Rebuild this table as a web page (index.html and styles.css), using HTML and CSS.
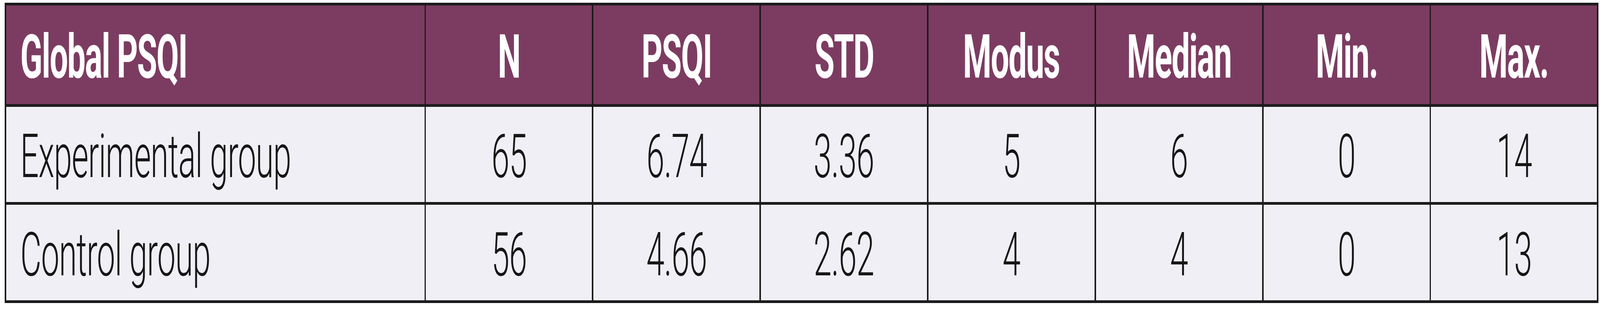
FILE: index.html
```html
<!DOCTYPE html>
<html lang="en">
<head>
<meta charset="utf-8">
<title>Global PSQI</title>
<link rel="stylesheet" href="styles.css">
</head>
<body>
<div class="psqi" role="table" aria-label="Global PSQI">
  <div class="cell head label" role="columnheader"><span class="t">Global PSQI</span></div>
  <div class="cell head" role="columnheader"><span class="t">N</span></div>
  <div class="cell head" role="columnheader"><span class="t">PSQI</span></div>
  <div class="cell head" role="columnheader"><span class="t">STD</span></div>
  <div class="cell head" role="columnheader"><span class="t">Modus</span></div>
  <div class="cell head" role="columnheader"><span class="t">Median</span></div>
  <div class="cell head" role="columnheader"><span class="t">Min.</span></div>
  <div class="cell head" role="columnheader"><span class="t">Max.</span></div>

  <div class="cell label" role="rowheader"><span class="t">Experimental group</span></div>
  <div class="cell" role="cell"><span class="t">65</span></div>
  <div class="cell" role="cell"><span class="t">6.74</span></div>
  <div class="cell" role="cell"><span class="t">3.36</span></div>
  <div class="cell" role="cell"><span class="t">5</span></div>
  <div class="cell" role="cell"><span class="t">6</span></div>
  <div class="cell" role="cell"><span class="t">0</span></div>
  <div class="cell" role="cell"><span class="t">14</span></div>

  <div class="cell label" role="rowheader"><span class="t">Control group</span></div>
  <div class="cell" role="cell"><span class="t">56</span></div>
  <div class="cell" role="cell"><span class="t">4.66</span></div>
  <div class="cell" role="cell"><span class="t">2.62</span></div>
  <div class="cell" role="cell"><span class="t">4</span></div>
  <div class="cell" role="cell"><span class="t">4</span></div>
  <div class="cell" role="cell"><span class="t">0</span></div>
  <div class="cell" role="cell"><span class="t">13</span></div>
</div>
</body>
</html>
```
FILE: styles.css
```css
html, body {
  margin: 0;
  padding: 0;
  background: #ffffff;
  overflow: hidden;
}

body {
  padding: 7px 0 0 0.2886vw;
}

.psqi {
  box-sizing: border-box;
  width: 99.619vw;
  display: grid;
  grid-template-columns: 26.148vw repeat(7, minmax(0, 1fr));
  grid-template-rows: 253px 244px 245px;
  gap: 7px 0.0918vw;
  padding: 7px 0.0918vw;
  background: #1c1b1c;
  font-family: Roboto, "Liberation Sans", sans-serif;
  font-size: 155px;
  line-height: 1;
}

.cell {
  min-width: 0;
  display: flex;
  align-items: center;
  justify-content: center;
  padding-top: 11px;
  box-sizing: border-box;
  background: #f0eff6;
  color: #161616;
  font-weight: 300;
  letter-spacing: -1.7px;
  white-space: nowrap;
}

.head {
  background: #7c3c61;
  color: #ffffff;
  font-weight: 700;
  letter-spacing: -3.4px;
}

.label {
  justify-content: flex-start;
  padding-left: 0.892vw;
}

/* glyphs keep the reference's width-to-frame ratio */
.t {
  display: inline-block;
  transform: scaleX(0.5374);
  transform-origin: 50% 50%;
}

.label .t {
  transform-origin: 0 50%;
}
```
